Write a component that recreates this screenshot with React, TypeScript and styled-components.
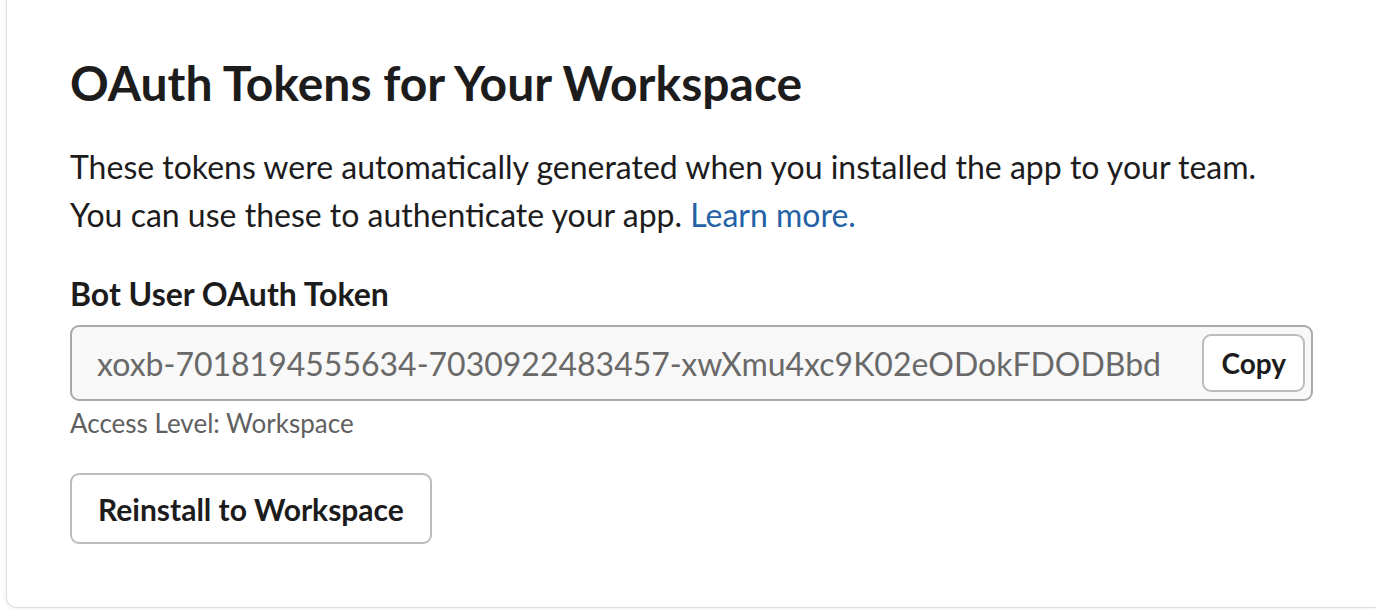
import styled, { createGlobalStyle } from 'styled-components';

const GlobalStyle = createGlobalStyle`
    html, body {
        margin: 0;
        padding: 0;
        background: #ffffff;
        overflow: hidden;
    }
    body {
        font-family: Lato, "Noto Sans", "Liberation Sans", sans-serif;
        color: #1d1c1d;
    }
`;

const Page = styled.div`
    width: 1376px;
    height: 610px;
    padding-left: 6px;
    box-sizing: border-box;
`;

const Card = styled.section`
    width: 1378px;
    height: 608px;
    box-sizing: border-box;
    background: #fff;
    border: 1px solid #dedede;
    border-top: none;
    border-radius: 0 0 10px 10px;
    box-shadow: 0 0 5px rgba(0, 0, 0, 0.08);
    padding: 55px 0 0 63px;
`;

const Heading = styled.h2`
    margin: 0;
    font-size: 48px;
    line-height: 56px;
    font-weight: 700;
`;

const Intro = styled.p`
    margin: 32px 0 0;
    font-size: 32px;
    line-height: 48px;
    max-width: 1220px;
`;

const Link = styled.a`
    color: #2462a5;
    text-decoration: none;
`;

const Label = styled.div`
    margin-top: 35px;
    font-size: 32px;
    line-height: 40px;
    font-weight: 700;
`;

const TokenField = styled.div`
    margin-top: 11px;
    width: 1243px;
    height: 76px;
    box-sizing: border-box;
    display: flex;
    align-items: center;
    justify-content: space-between;
    padding: 0 6px 0 25px;
    background: #f8f8f8;
    border: 2px solid #a9a9a9;
    border-radius: 9px;
`;

const TokenText = styled.span`
    font-size: 32px;
    color: #696969;
`;

const Button = styled.button<{ $size: 'sm' | 'md' }>`
    font-family: inherit;
    font-weight: 700;
    color: #1d1c1d;
    background: #fff;
    border: 2px solid #bcbcbc;
    border-radius: 9px;
    cursor: pointer;
    box-sizing: border-box;
    height: ${(p) => (p.$size === 'sm' ? '58px' : '71px')};
    padding: ${(p) => (p.$size === 'sm' ? '0 17px' : '0 26px')};
    font-size: ${(p) => (p.$size === 'sm' ? '28px' : '30px')};
`;

const Hint = styled.div`
    margin-top: 6px;
    font-size: 26px;
    line-height: 32px;
    color: #616061;
`;

const Actions = styled.div`
    margin-top: 34px;
`;

export default function App() {
    return (
        <>
            <GlobalStyle />
            <Page>
                <Card>
                    <Heading>OAuth Tokens for Your Workspace</Heading>
                    <Intro>
                        These tokens were automatically generated when you installed the app to your team. You can use
                        these to authenticate your app. <Link href="#">Learn more.</Link>
                    </Intro>
                    <Label>Bot User OAuth Token</Label>
                    <TokenField>
                        <TokenText>xoxb-7018194555634-7030922483457-xwXmu4xc9K02eODokFDODBbd</TokenText>
                        <Button $size="sm">Copy</Button>
                    </TokenField>
                    <Hint>Access Level: Workspace</Hint>
                    <Actions>
                        <Button $size="md">Reinstall to Workspace</Button>
                    </Actions>
                </Card>
            </Page>
        </>
    );
}
